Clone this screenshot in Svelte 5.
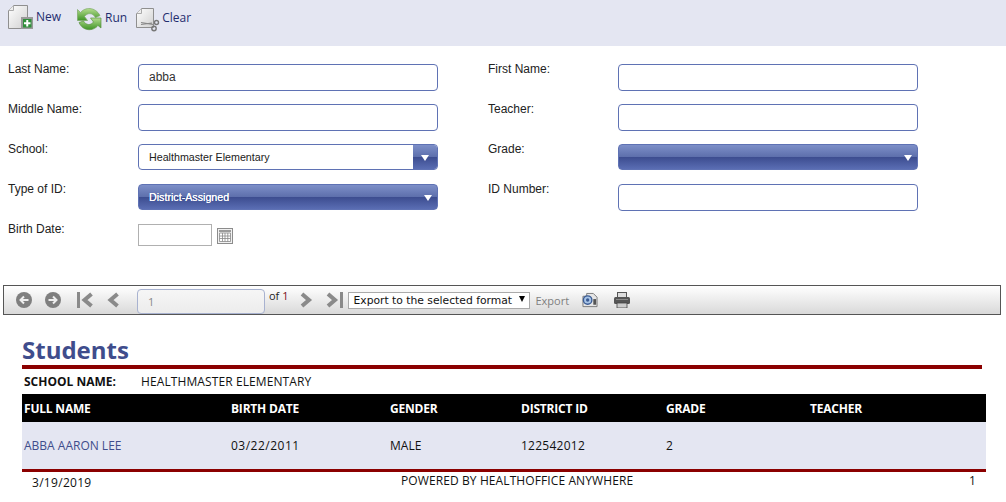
<script>
  const columns = [
    { label: 'FULL NAME', value: 'ABBA AARON LEE', width: 207, link: true },
    { label: 'BIRTH DATE', value: '03/22/2011', width: 159, spacing: 'date' },
    { label: 'GENDER', value: 'MALE', width: 131 },
    { label: 'DISTRICT ID', value: '122542012', width: 145, spacing: 'id' },
    { label: 'GRADE', value: '2', width: 144 },
    { label: 'TEACHER', value: '', width: 178 }
  ];
</script>

<div class="page">
  <header class="toolbar">
    <button class="tool tool-new">
      <svg width="28" height="30" viewBox="0 0 28 30">
        <defs>
          <linearGradient id="paper" x1="0" y1="0" x2="1" y2="1"><stop offset="0" stop-color="#fff"/><stop offset="1" stop-color="#d0d0d0"/></linearGradient>
        </defs>
        <path d="M.5 5.500 L5.500 .5 H19.500 V23.500 H.5 Z" fill="url(#paper)" stroke="#8f8f8f"/>
        <path d="M.5 5.500 H5.500 V.5" fill="#eee" stroke="#aaa"/>
        <rect x="13" y="12" width="12" height="12" fill="#999"/>
        <rect x="15" y="14" width="8.500" height="8.500" fill="#2f8f3a"/>
        <path d="M19.250 15 V21.500 M16 18.250 H22.500" stroke="#fff" stroke-width="2"/>
      </svg>
      <span class="tool-label">New</span>
    </button>
    <button class="tool tool-run">
      <svg width="25" height="25" viewBox="0 0 25 25">
        <defs>
          <linearGradient id="green" x1="0" y1="0" x2="0" y2="1"><stop offset="0" stop-color="#b4dd8e"/><stop offset="1" stop-color="#3f9427"/></linearGradient>
        </defs>
        <path d="M.5 2.500 L3.500 5.500 C8 0 18 -.5 23 8.500 L18.500 10.500 C15.500 5.500 10.500 5.500 7.500 9.500 L10.500 13.500 H.5 Z" fill="url(#green)" stroke="#7ba866" stroke-width=".7"/>
        <path d="M24 21 L21 18.500 C16 24.500 6 24.500 2 15.500 L6.500 14 C9 18.500 14 18.500 16.500 15 L13.500 11 H24 Z" fill="url(#green)" stroke="#5d9445" stroke-width=".7"/>
      </svg>
      <span class="tool-label">Run</span>
    </button>
    <button class="tool tool-clear">
      <svg width="24" height="24" viewBox="0 0 24 24">
        <path d="M.5 5.500 L5.500 .5 H17.500 V19.500 H.5 Z" fill="url(#paper)" stroke="#8f8f8f"/>
        <path d="M.5 5.500 H5.500 V.5" fill="#eee" stroke="#aaa"/>
        <path d="M5 14.500 L17 16.500 M5 16.500 L16 15" stroke="#888" stroke-width="1.200"/>
        <circle cx="20.500" cy="14.500" r="2" fill="none" stroke="#777" stroke-width="1.400"/>
        <circle cx="18" cy="20.500" r="2.200" fill="none" stroke="#777" stroke-width="1.400"/>
      </svg>
      <span class="tool-label">Clear</span>
    </button>
  </header>

  <form class="form">
    <span class="label">Last Name:</span>
    <div class="input">abba</div>
    <span class="label">First Name:</span>
    <div class="input"></div>

    <span class="label">Middle Name:</span>
    <div class="input"></div>
    <span class="label">Teacher:</span>
    <div class="input"></div>

    <span class="label">School:</span>
    <div class="select">
      <span class="select-text">Healthmaster Elementary</span>
      <span class="select-arrow"><i class="arrow"></i></span>
    </div>
    <span class="label">Grade:</span>
    <div class="select filled">
      <span class="select-text"></span>
      <i class="arrow"></i>
    </div>

    <span class="label">Type of ID:</span>
    <div class="select filled">
      <span class="select-text">District-Assigned</span>
      <i class="arrow"></i>
    </div>
    <span class="label">ID Number:</span>
    <div class="input"></div>

    <span class="label">Birth Date:</span>
    <div class="date-field">
      <div class="date-input"></div>
      <svg width="16" height="16" viewBox="0 0 16 16">
        <rect x=".5" y=".5" width="15" height="15" fill="#f1f1f1" stroke="#8c8c8c"/>
        <rect x="2" y="2" width="12" height="2" fill="#9a9a9a"/>
        <path d="M2.500 5 V13.500 H13.500 V5 M2.500 5 H13.500 M2.500 8 H13.500 M2.500 10.500 H13.500 M5.500 5 V13.500 M8 5 V13.500 M10.800 5 V13.500" fill="#fff" stroke="#888" stroke-width=".8"/>
      </svg>
    </div>
  </form>

  <nav class="viewer">
    <svg class="vi" width="16" height="16" viewBox="0 0 16 16"><circle cx="8" cy="8" r="8" fill="#7f7f7f"/><path d="M12.500 8 H5 M8 4.500 L4.500 8 L8 11.500" fill="none" stroke="#eee" stroke-width="2"/></svg>
    <svg class="vi gap-13" width="16" height="16" viewBox="0 0 16 16"><circle cx="8" cy="8" r="8" fill="#7f7f7f"/><path d="M3.500 8 H11 M8 4.500 L11.500 8 L8 11.500" fill="none" stroke="#eee" stroke-width="2"/></svg>
    <svg class="vi gap-16" width="18" height="16" viewBox="0 0 18 16"><path d="M1.500 0 V16" stroke="#8a8a8a" stroke-width="3"/><path d="M14.500 2 L7.500 8 L14.500 14" fill="none" stroke="#8a8a8a" stroke-width="4"/></svg>
    <svg class="vi gap-12" width="13" height="16" viewBox="0 0 13 16"><path d="M10.500 2 L3.500 8 L10.500 14" fill="none" stroke="#8a8a8a" stroke-width="4"/></svg>
    <div class="page-input">1</div>
    <span class="page-of">of <span class="page-total">1</span></span>
    <svg class="vi gap-11" width="14" height="16" viewBox="0 0 14 16"><path d="M3 2 L10 8 L3 14" fill="none" stroke="#8a8a8a" stroke-width="4"/></svg>
    <svg class="vi gap-13" width="18" height="16" viewBox="0 0 18 16"><path d="M2 2 L9 8 L2 14" fill="none" stroke="#8a8a8a" stroke-width="4"/><path d="M15.500 0 V16" stroke="#8a8a8a" stroke-width="3"/></svg>
    <div class="format">
      <span>Export to the selected format</span>
      <i class="format-arrow"></i>
    </div>
    <span class="export">Export</span>
    <svg class="vi gap-13" width="16" height="17" viewBox="0 0 17 17">
      <path d="M5 1 H12 L16 5 V15 H1 V4 H5 Z" fill="#e6e6e6" stroke="#777"/>
      <circle cx="6" cy="8" r="4.500" fill="#a8c4e6" stroke="#3a5b94" stroke-width="1.400"/>
      <circle cx="6" cy="8" r="1.800" fill="#3a5b94"/>
      <rect x="12" y="7" width="3" height="6" fill="#555"/>
    </svg>
    <svg class="vi gap-16" width="16" height="16" viewBox="0 0 16 16">
      <rect x="3.500" y=".5" width="9" height="5" fill="#ddd" stroke="#555"/>
      <rect x="0" y="5" width="16" height="7" rx="1.500" fill="#555"/>
      <rect x="2" y="7" width="12" height="1" fill="#888"/>
      <rect x="3" y="11" width="10" height="5" fill="#ccc" stroke="#444" stroke-width=".8"/>
    </svg>
  </nav>

  <section class="report">
    <h1 class="title">Students</h1>
    <div class="title-rule"></div>
    <div class="school">
      <strong>SCHOOL NAME:</strong>
      <span class="wide">HEALTHMASTER ELEMENTARY</span>
    </div>
    <div class="table">
      <div class="row head">
        {#each columns as c}
          <span class="cell" style="width:{c.width}px">{c.label}</span>
        {/each}
      </div>
      <div class="row body">
        {#each columns as c}
          <span class="cell" class:link={c.link} class:date={c.spacing === 'date'} class:id={c.spacing === 'id'} style="width:{c.width}px">{c.value}</span>
        {/each}
      </div>
    </div>
    <footer class="foot">
      <span class="foot-date">3/19/2019</span>
      <span class="foot-mid wide">POWERED BY HEALTHOFFICE ANYWHERE</span>
      <span class="foot-page">1</span>
    </footer>
  </section>
</div>

<style>
  :global(body) {
    margin: 0;
    background: #fff;
    overflow: hidden;
  }
  .page {
    width: 1006px;
    height: 502px;
    overflow: hidden;
    font-family: "Liberation Sans", Arial, sans-serif;
  }
  .toolbar {
    height: 46px;
    box-sizing: border-box;
    background: #e4e6f2;
    display: flex;
    align-items: flex-start;
    padding: 5px 0 0 8px;
  }
  .tool {
    all: unset;
    display: flex;
    align-items: flex-start;
    font-family: "Open Sans", sans-serif;
    font-size: 12px;
    color: #1f2d6e;
  }
  .tool-label { line-height: 16px; }
  .tool-new .tool-label { margin: 4px 0 0 0; }
  .tool-run { margin-left: 16px; margin-top: 2px; }
  .tool-run .tool-label { margin: 3px 0 0 3px; }
  .tool-clear { margin-left: 9px; margin-top: 3px; }
  .tool-clear .tool-label { margin: 2px 0 0 2px; }

  .form {
    display: grid;
    grid-template-columns: 130px 350px 130px 300px;
    grid-auto-rows: 40px;
    padding: 18px 0 0 8px;
    height: 239px;
    box-sizing: border-box;
    color: #222;
    font-size: 12px;
  }
  .label {
    line-height: 14px;
    margin-top: -2px;
  }
  .input, .select {
    width: 300px;
    height: 27px;
    box-sizing: border-box;
    border: 1px solid #5f72b4;
    border-radius: 4px;
    background: #fff;
  }
  .input {
    font-size: 12px;
    line-height: 25px;
    padding-left: 10px;
    color: #333;
  }
  .select {
    display: flex;
    align-items: center;
    overflow: hidden;
    font-size: 10.700px;
    color: #222;
    height: 26px;
  }
  .select-text {
    flex: 1;
    padding-left: 10px;
    line-height: 24px;
  }
  .select-arrow {
    width: 24px;
    height: 100%;
    display: flex;
    align-items: center;
    justify-content: center;
    background: linear-gradient(#7d8fc8 0, #5e70ad 48%, #3c4c8f 50%, #5a6db3 100%);
  }
  .arrow {
    width: 0;
    height: 0;
    border-left: 4.500px solid transparent;
    border-right: 4.500px solid transparent;
    border-top: 6px solid #fff;
    margin-top: 2px;
  }
  .filled {
    background: linear-gradient(#7d8fc8 0, #5e70ad 48%, #3c4c8f 50%, #5a6db3 100%);
    color: #fff;
    text-shadow: 0 0 .5px #fff;
  }
  .filled .arrow { margin-right: 5px; }
  .date-field {
    display: flex;
    align-items: center;
    gap: 5px;
    height: 22px;
  }
  .date-field svg { margin-top: 1px; }
  .date-input {
    width: 74px;
    height: 22px;
    box-sizing: border-box;
    border: 1px solid #b0b0b0;
    background: #fff;
  }

  .viewer {
    margin: 0 5px 0 3px;
    height: 30px;
    box-sizing: border-box;
    border: 1px solid #555;
    background: linear-gradient(#fff, #eee 45%, #d9d9d9);
    display: flex;
    align-items: center;
    padding-left: 12px;
    font-size: 12px;
  }
  .gap-11 { margin-left: 11px; }
  .gap-12 { margin-left: 12px; }
  .gap-13 { margin-left: 13px; }
  .gap-16 { margin-left: 16px; }
  .vi { flex: none; }
  .page-input {
    width: 128px;
    height: 25px;
    box-sizing: border-box;
    margin: 3px 0 0 17px;
    border: 1px solid #a8b2d0;
    border-radius: 4px;
    background: linear-gradient(#f6f6f6, #ececec);
    color: #888;
    font-family: "Open Sans", sans-serif;
    font-size: 11px;
    line-height: 24px;
    padding-left: 10px;
  }
  .page-of {
    margin: 0 0 9px 4px;
    font-family: "Open Sans", sans-serif;
    font-size: 11px;
    color: #222;
  }
  .page-total { color: #7a1020; }
  .format {
    margin-left: 4px;
    width: 182px;
    height: 17px;
    box-sizing: border-box;
    border: 1px solid #aaa;
    background: #fff;
    display: flex;
    align-items: center;
    font-family: "DejaVu Sans", sans-serif;
    font-size: 10.750px;
    color: #111;
    padding-left: 4px;
    white-space: nowrap;
  }
  .format-arrow {
    margin-left: 7px;
    margin-top: -2px;
    border-left: 3.500px solid transparent;
    border-right: 3.500px solid transparent;
    border-top: 6px solid #000;
  }
  .export {
    margin-left: 5px;
    font-family: "Open Sans", sans-serif;
    font-size: 11px;
    color: #7f7f7f;
  }

  .report {
    margin-left: 22px;
    font-family: "Open Sans", sans-serif;
    font-size: 12px;
    color: #111;
  }
  .title {
    margin: 0;
    height: 50px;
    box-sizing: border-box;
    padding-top: 19px;
    font-size: 24px;
    line-height: 31px;
    font-weight: bold;
    color: #3f4d8c;
  }
  .title-rule {
    width: 960px;
    height: 4px;
    background: #8b0000;
  }
  .school {
    display: flex;
    height: 25px;
    align-items: center;
    padding-left: 2px;
  }
  .school strong { width: 117px; }
  .wide { letter-spacing: .1px; }
  .table {
    width: 964px;
    border-bottom: 3px solid #8b0000;
  }
  .row { display: flex; }
  .cell {
    box-sizing: border-box;
    padding-left: 2px;
    flex: none;
  }
  .head {
    height: 28px;
    background: #000;
    color: #fff;
    font-weight: bold;
    letter-spacing: -.2px;
    align-items: center;
  }
  .body {
    height: 47px;
    background: #e4e6f2;
    align-items: center;
  }
  .link { color: #3f4d8c; }
  .date { letter-spacing: .5px; }
  .id { letter-spacing: .25px; }
  .foot {
    width: 964px;
    display: flex;
    height: 20px;
    line-height: 18px;
  }
  .foot-date { margin-left: 10px; width: 369px; margin-top: 2px; letter-spacing: .3px; }
  .foot-mid { width: 565px; }
  .foot-page { margin-left: 3px; }
</style>
